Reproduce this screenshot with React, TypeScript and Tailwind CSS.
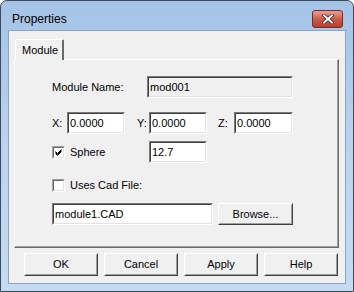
import type { ReactNode } from "react";

const font = { fontFamily: '"Liberation Sans", Arial, sans-serif' };

function Field({ value, width, readOnly }: { value: string; width: string; readOnly?: boolean }) {
  return (
    <div
      className={`${width} h-[22px] border border-t-[#7a7a7a] border-l-[#7a7a7a] border-r-white border-b-white`}
    >
      <div
        className={`h-full border border-t-[#404040] border-l-[#404040] border-r-[#e3e3e3] border-b-[#e3e3e3] pl-[1px] leading-[18px] ${
          readOnly ? "bg-[#f0f0f0]" : "bg-white"
        }`}
      >
        {value}
      </div>
    </div>
  );
}

function Button({ children, width, height }: { children: ReactNode; width: string; height: string }) {
  return (
    <div
      className={`${width} ${height} border border-t-white border-l-white border-r-[#404040] border-b-[#404040]`}
    >
      <div className="h-full flex items-center justify-center border border-t-[#f0f0f0] border-l-[#f0f0f0] border-r-[#a0a0a0] border-b-[#a0a0a0] bg-[#f0f0f0]">
        {children}
      </div>
    </div>
  );
}

function Check({ checked }: { checked?: boolean }) {
  return (
    <div className="w-[13px] h-[13px] border border-t-[#a0a0a0] border-l-[#a0a0a0] border-r-white border-b-white">
      <div className="w-full h-full border border-t-[#696969] border-l-[#696969] border-r-[#e3e3e3] border-b-[#e3e3e3] bg-white">
        {checked && (
          <svg width="9" height="9" viewBox="0 0 9 9" className="block">
            <path d="M1.5 3.5 L3.5 5.5 L7.5 1.5 M1.5 4.5 L3.5 6.5 L7.5 2.5 M1.5 5.5 L3.5 7.5 L7.5 3.5" stroke="#000" strokeWidth="1" fill="none" />
          </svg>
        )}
      </div>
    </div>
  );
}

export default function App() {
  return (
    <div
      className="w-[354px] h-[292px] rounded-t-[7px] border border-[#3a4b5e] bg-gradient-to-b from-[#a4c3e6] via-[#bad3ef] to-[#c5dbf2] text-[11px] text-black flex flex-col"
      style={font}
    >
      <div className="h-[29px] flex items-start shrink-0">
        <span className="ml-[11px] mt-[11px] text-[12px] leading-[14px]">Properties</span>
        <div className="ml-auto mr-[10px] mt-[9px] w-[31px] h-[18px] rounded-[3px] border border-[#7a2a25] bg-gradient-to-b from-[#e4a197] via-[#cc5b4c] to-[#b83d2f] flex items-center justify-center">
          <svg width="12" height="10" viewBox="0 0 12 10">
            <path d="M2 1.5 L10 8.5 M10 1.5 L2 8.5" stroke="#3d1410" strokeWidth="3.4" strokeLinecap="square" />
            <path d="M2 1.5 L10 8.5 M10 1.5 L2 8.5" stroke="#ffffff" strokeWidth="2" strokeLinecap="square" />
          </svg>
        </div>
      </div>
      <div className="mx-[7px] h-[254px] bg-[#f0f0f0] border border-[#8aa5c4] flex flex-col">
        <div className="pl-[5px] pt-[7px] pr-[6px]">
          <div className="flex">
            <div className="w-[49px] h-[21px] ml-[1px] border-t border-l border-white border-r-2 border-r-[#696969] rounded-tr-[2px] flex items-center pl-[6px] relative top-[1px] z-10 bg-[#f0f0f0]">
              Module
            </div>
          </div>
          <div className="w-[325px] h-[189px] border border-t-white border-l-white border-r-[#696969] border-b-[#696969]">
            <div className="h-full border-r border-b border-r-[#a0a0a0] border-b-[#a0a0a0] pl-[37px] pt-[16px] flex flex-col">
              <div className="flex items-center h-[22px]">
                <span className="w-[95px]">Module Name:</span>
                <Field value="mod001" width="w-[146px]" readOnly />
              </div>
              <div className="flex items-center h-[22px] mt-[14px]">
                <span className="w-[15px]">X:</span>
                <Field value="0.0000" width="w-[58px]" />
                <span className="w-[12px] ml-[12px]">Y:</span>
                <Field value="0.0000" width="w-[58px]" />
                <span className="w-[16px] ml-[11px]">Z:</span>
                <Field value="0.0000" width="w-[59px]" />
              </div>
              <div className="flex items-center h-[22px] mt-[7px]">
                <Check checked />
                <span className="ml-[5px] w-[79px]">Sphere</span>
                <Field value="12.7" width="w-[58px]" />
              </div>
              <div className="flex items-center h-[13px] mt-[16px]">
                <Check />
                <span className="ml-[5px]">Uses Cad File:</span>
              </div>
              <div className="flex items-center h-[22px] mt-[11px]">
                <Field value="module1.CAD" width="w-[161px]" />
                <div className="ml-[5px]">
                  <Button width="w-[75px]" height="h-[22px]">Browse...</Button>
                </div>
              </div>
            </div>
          </div>
        </div>
        <div className="flex justify-between pl-[15px] pr-[7px] mt-[5px]">
          <Button width="w-[74px]" height="h-[23px]">OK</Button>
          <Button width="w-[74px]" height="h-[23px]">Cancel</Button>
          <Button width="w-[74px]" height="h-[23px]">Apply</Button>
          <Button width="w-[74px]" height="h-[23px]">Help</Button>
        </div>
      </div>
    </div>
  );
}
